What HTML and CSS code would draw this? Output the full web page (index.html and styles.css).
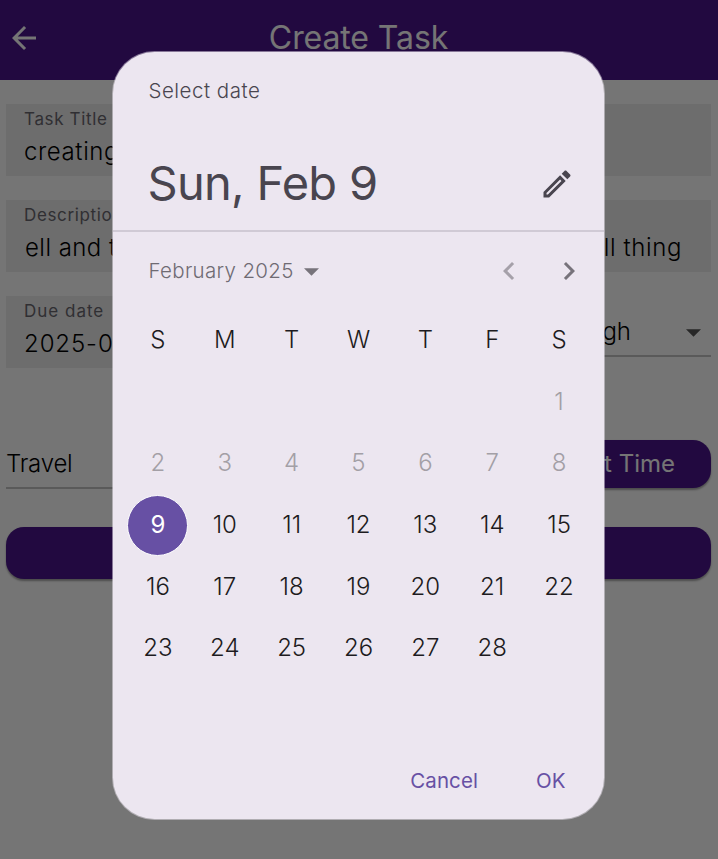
FILE: index.html
```html
<!DOCTYPE html>
<html lang="en">
<head>
<meta charset="utf-8">
<title>Create Task</title>
<link rel="stylesheet" href="styles.css">
</head>
<body>
<div class="page">
  <header class="appbar">
    <svg class="back" viewBox="0 0 24 24"><path d="M20 11H7.8l5.6-5.6L12 4l-8 8 8 8 1.4-1.4L7.8 13H20z"/></svg>
    <h1><span>Create Task</span></h1>
  </header>
  <main class="form">
    <div class="field"><label>Task Title</label><div class="value title">creating</div></div>
    <div class="field"><label>Description</label><div class="value split"><span class="desc">ell and t</span><span>ll thing</span></div></div>
    <div class="row">
      <div class="field half"><label class="due">Due date</label><div class="value date">2025-0</div></div>
      <div class="select priority"><span>gh</span><svg viewBox="0 0 16 8"><path d="M0 0h16L8 8z"/></svg></div>
    </div>
    <div class="row second">
      <div class="select category"><span>Travel</span></div>
      <button class="btn time">t Time</button>
    </div>
    <button class="btn submit"></button>
  </main>
</div>
<div class="scrim">
  <section class="dialog">
    <div class="head">
      <div class="hint"><span>Select date</span></div>
      <div class="picked">
        <span class="big">Sun, Feb 9</span>
        <svg class="pencil" viewBox="0 0 24 24"><path d="M14.06 9.02l.92.92L5.92 19H5v-.92l9.06-9.06M17.66 3c-.25 0-.51.1-.7.29l-1.83 1.83 3.75 3.75 1.83-1.83c.39-.39.39-1.02 0-1.41l-2.34-2.34c-.2-.2-.45-.29-.71-.29zm-3.6 3.19L3 17.25V21h3.75L17.81 9.94l-3.75-3.75z"/></svg>
      </div>
    </div>
    <div class="month">
      <span class="name">February 2025</span>
      <svg class="caret" viewBox="0 0 14 7"><path d="M0 0h14L7 7z"/></svg>
      <svg class="chev off" viewBox="0 0 24 24"><path d="M15.41 7.41L14 6l-6 6 6 6 1.41-1.41L10.83 12z"/></svg>
      <svg class="chev" viewBox="0 0 24 24"><path d="M10 6L8.59 7.41 13.17 12l-4.58 4.59L10 18l6-6z"/></svg>
    </div>
    <div class="grid">
      <b>S</b><b>M</b><b>T</b><b>W</b><b>T</b><b>F</b><b>S</b>
      <i></i><i></i><i></i><i></i><i></i><i></i><i class="past">1</i>
      <i class="past">2</i><i class="past">3</i><i class="past">4</i><i class="past">5</i><i class="past">6</i><i class="past">7</i><i class="past">8</i>
      <i><span class="today"><span>9</span></span></i><i>10</i><i>11</i><i>12</i><i>13</i><i>14</i><i>15</i>
      <i>16</i><i>17</i><i>18</i><i>19</i><i>20</i><i>21</i><i>22</i>
      <i>23</i><i>24</i><i>25</i><i>26</i><i>27</i><i>28</i><i></i>
    </div>
    <div class="actions"><span class="cancel">Cancel</span><span class="ok">OK</span></div>
  </section>
</div>
</body>
</html>
```
FILE: styles.css
```css
* { box-sizing: border-box; }
body { margin: 0; font-family: Inter, "Open Sans", sans-serif; font-weight: 300; overflow: hidden; }
.page { height: 859px; background: #fff; }
.appbar { height: 80px; background: #4a148c; display: flex; align-items: center; padding: 0 6px; }
.back { width: 36px; height: 36px; fill: #fff; flex: none; margin-top: -4px; }
.appbar h1 { flex: 1; margin: -4px 37px 0 0; text-align: center; font-size: 32px; line-height: 40px; font-weight: 400; color: #fff; letter-spacing: -.1px; }
.form { padding: 24px 7px 0 6px; display: flex; flex-direction: column; gap: 24px; }
.field { height: 72px; background: #ededed; padding: 5px 18px 0 18px; }
.field label { display: block; font-size: 17px; line-height: 20px; letter-spacing: .65px; color: #6a6870; font-weight: 400; }
.field .due { letter-spacing: 1px; }
.value { font-size: 24px; line-height: 30px; margin-top: 8px; letter-spacing: .6px; color: #000; display: flex; }
.date { letter-spacing: .9px; }
.desc { letter-spacing: .45px; padding-left: 1px; }
.split { justify-content: space-between; margin-right: 11px; }
.row { display: flex; gap: 24px; }
.half { flex: 1; }
.select { flex: 1; height: 61px; border-bottom: 2px solid #c4c4c4; display: flex; align-items: center; justify-content: space-between; font-size: 24px; }
.priority { padding: 12px 10px 0 0; justify-content: flex-end; gap: 55px; }
.priority svg { width: 15px; height: 8px; fill: #555; margin-top: 2px; }
.second { margin-top: 48px; height: 48px; }
.category { height: 49px; letter-spacing: -.2px; }
.btn { border: 0; background: #4a148c; border-radius: 18px; color: #fff; font: 400 24px Inter, sans-serif; box-shadow: 0 1.5px 2px rgba(0,0,0,.35); }
.time { width: 230px; height: 48px; padding: 0 36px 2px 0; text-align: right; }
.submit { height: 52px; margin-top: 15px; }
.scrim { position: absolute; inset: 0; background: rgba(0,0,0,.54); display: flex; padding: 52px 0 0 113px; }
.dialog { width: 491px; height: 767px; border-radius: 41.5px; background: #ece6f0; box-shadow: 0 0 0 1px rgba(236,230,240,.5); display: flex; flex-direction: column; }
.head { height: 179.5px; flex: none; border-bottom: 2px solid #d0cad5; padding: 25px 29.5px 0 35.5px; color: #49454f; }
.hint { font-size: 20.5px; line-height: 28px; letter-spacing: .5px; }
.picked { display: flex; align-items: center; justify-content: space-between; margin-top: 48.5px; height: 60px; }
.big { font-size: 47px; line-height: 60px; letter-spacing: -.7px; white-space: nowrap; margin: -1px 0 0 -1px; font-weight: 400; }
.pencil { width: 36px; height: 36px; fill: #49454f; }
.month { height: 78px; flex: none; display: flex; align-items: center; padding: 0 17.5px 0 35.5px; color: #6f6b73; }
.name { font-size: 20.5px; letter-spacing: .32px; }
.caret { width: 15px; height: 8px; fill: #77737b; margin: 2px auto 0 10px; }
.chev { width: 36px; height: 36px; fill: #77737b; }
.chev.off { opacity: .6; margin-right: 24px; }
.grid { padding: 0 11.5px; display: grid; grid-template-columns: repeat(7, 1fr); grid-auto-rows: 61.6px; font-size: 24px; color: #1d1b20; }
.grid b, .grid i { font-style: normal; font-weight: 300; display: flex; align-items: center; justify-content: center; padding-bottom: 1px; }
.grid .past { color: #a39fa6; }
.today { width: 61px; height: 61px; flex: none; margin-bottom: -1px; border-radius: 50%; border: 1.5px solid #fff; background: #6750a4; color: #fff; display: flex; align-items: center; justify-content: center; font-weight: 400; padding-bottom: 2px; }
.actions { margin-top: auto; height: 78px; display: flex; justify-content: flex-end; gap: 58px; padding: 27px 38.5px 0 0; color: #6750a4; font-size: 20.5px; line-height: 26px; font-weight: 400; }
.cancel { letter-spacing: .1px; }
```
